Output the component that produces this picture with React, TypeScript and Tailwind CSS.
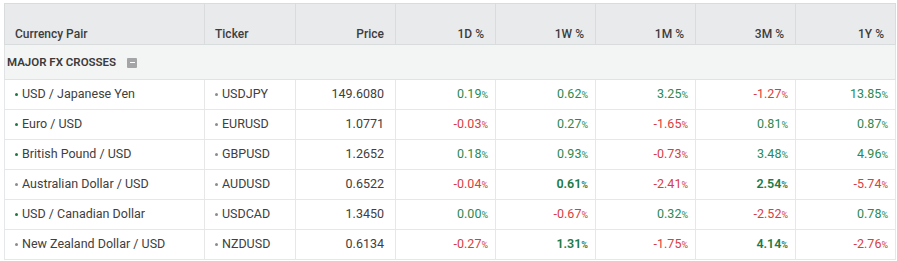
const columns = ["1D %", "1W %", "1M %", "3M %", "1Y %"];

type Change = { v: string; bold?: boolean };

const rows: { name: string; live: boolean; ticker: string; price: string; changes: Change[] }[] = [
  { name: "USD / Japanese Yen", live: true, ticker: "USDJPY", price: "149.6080", changes: [{ v: "0.19" }, { v: "0.62" }, { v: "3.25" }, { v: "-1.27" }, { v: "13.85" }] },
  { name: "Euro / USD", live: true, ticker: "EURUSD", price: "1.0771", changes: [{ v: "-0.03" }, { v: "0.27" }, { v: "-1.65" }, { v: "0.81" }, { v: "0.87" }] },
  { name: "British Pound / USD", live: true, ticker: "GBPUSD", price: "1.2652", changes: [{ v: "0.18" }, { v: "0.93" }, { v: "-0.73" }, { v: "3.48" }, { v: "4.96" }] },
  { name: "Australian Dollar / USD", live: false, ticker: "AUDUSD", price: "0.6522", changes: [{ v: "-0.04" }, { v: "0.61", bold: true }, { v: "-2.41" }, { v: "2.54", bold: true }, { v: "-5.74" }] },
  { name: "USD / Canadian Dollar", live: true, ticker: "USDCAD", price: "1.3450", changes: [{ v: "0.00" }, { v: "-0.67" }, { v: "0.32" }, { v: "-2.52" }, { v: "0.78" }] },
  { name: "New Zealand Dollar / USD", live: false, ticker: "NZDUSD", price: "0.6134", changes: [{ v: "-0.27" }, { v: "1.31", bold: true }, { v: "-1.75" }, { v: "4.14", bold: true }, { v: "-2.76" }] },
];

const Pct = ({ c }: { c: Change }) => {
  const neg = c.v.startsWith("-");
  return (
    <span className={`${neg ? "text-[#d8403e]" : c.bold ? "text-[#1f7a43]" : "text-[#2b8a50]"} ${c.bold ? "font-semibold" : ""}`}>
      {c.v}
      <span className="text-[9px]">%</span>
    </span>
  );
};

export default function App() {
  return (
    <div className="w-[897px] h-[261px] bg-white pt-[3px] pl-[4px] font-['Roboto',sans-serif] text-[#404040]">
      <table className="table-fixed border-collapse w-[891px] text-[12.5px]">
        <colgroup>
          <col className="w-[200px]" />
          <col className="w-[91px]" />
          <col className="w-[100px]" />
          <col className="w-[100px]" />
          <col className="w-[100px]" />
          <col className="w-[100px]" />
          <col className="w-[100px]" />
          <col className="w-[100px]" />
        </colgroup>
        <thead>
          <tr className="h-[41px] bg-[#e8eaeb] text-[12px] text-[#3d3d3d]">
            <th className="border border-[#d9dcdd] text-left align-bottom pb-[1px] pl-[10px] font-medium">Currency Pair</th>
            <th className="border border-[#d9dcdd] text-left align-bottom pb-[1px] pl-[10px] font-medium">Ticker</th>
            <th className="border border-[#d9dcdd] text-right align-bottom pb-[1px] pr-[11px] font-medium">Price</th>
            {columns.map(c => (
              <th key={c} className="border border-[#d9dcdd] text-right align-bottom pb-[1px] pr-[11px] font-medium">{c}</th>
            ))}
          </tr>
        </thead>
        <tbody>
          <tr className="h-[35px] bg-[#f3f4f4]">
            <td colSpan={8} className="border border-[#e0e2e3] pl-[2px] pt-[1px]">
              <div className="flex items-center gap-[11px] text-[11.5px] font-semibold text-[#3a3a3a]">
                <span>MAJOR FX CROSSES</span>
                <span className="flex items-center justify-center w-[10px] h-[10px] rounded-[1px] bg-[#a3a5a6]">
                  <span className="w-[5px] h-[1.5px] bg-white" />
                </span>
              </div>
            </td>
          </tr>
          {rows.map(r => (
            <tr key={r.ticker} className="h-[30px] bg-white">
              <td className="border border-[#e6e7e8] pl-[10px]">
                <div className="flex items-center gap-[4px]">
                  <span className={`w-[3px] h-[3px] rounded-full ${r.live ? "bg-[#1b7a3e]" : "bg-[#8c8c8c]"}`} />
                  <span>{r.name}</span>
                </div>
              </td>
              <td className="border border-[#e6e7e8] pl-[10px]">
                <div className="flex items-center gap-[4px]">
                  <span className="w-[3px] h-[3px] rounded-full bg-[#8c8c8c]" />
                  <span>{r.ticker}</span>
                </div>
              </td>
              <td className="border border-[#e6e7e8] text-right pr-[11px]">{r.price}</td>
              {r.changes.map((c, i) => (
                <td key={i} className="border border-[#e6e7e8] text-right pr-[7px]">
                  <Pct c={c} />
                </td>
              ))}
            </tr>
          ))}
        </tbody>
      </table>
    </div>
  );
}
